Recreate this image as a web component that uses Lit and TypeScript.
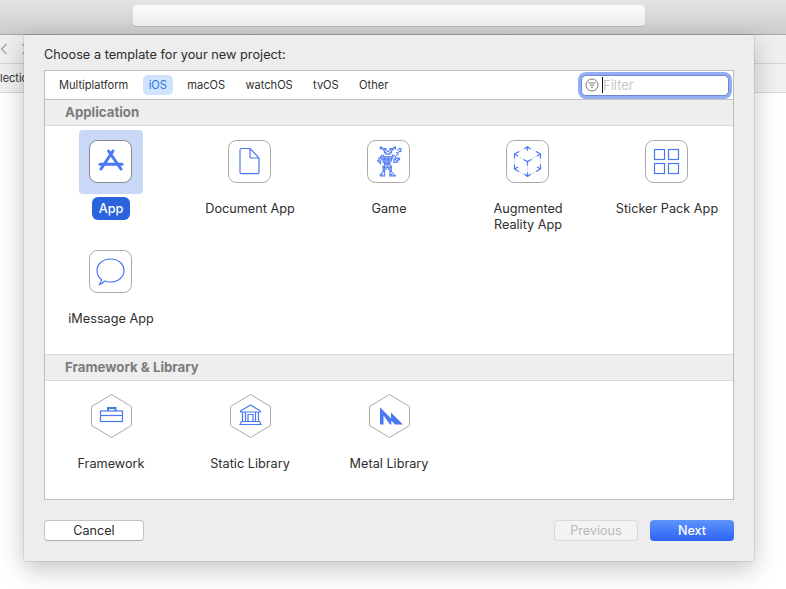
import { LitElement, html, css, svg } from "lit";
import { customElement } from "lit/decorators.js";

const GAME = [
  "..##........##....",
  "..#####..#####..##",
  "....###..###...#.#",
  ".....#.##.#.....##",
  ".....##..##...##..",
  "......####.....#..",
  "...##......##.#...",
  "..##########.#....",
  ".###########.####.",
  ".#.########.##.##.",
  "###.#######.#.##..",
  ".##.######..###...",
  "..#..#####........",
  ".....#####........",
  "....##.#.##.......",
  "....#######.......",
  "....###.###.......",
  "....##...##.......",
  "....##...##.......",
  "...#.#...#.#......",
  "..##.#...##.#.....",
  "..####...#####....",
];

const gamePixels = GAME.flatMap((row, y) =>
  [...row].map((c, x) =>
    c === "#" ? svg`<rect x=${(10 + x * 1.36).toFixed(2)} y=${(6.6 + y * 1.36).toFixed(2)} width="1.36" height="1.36"></rect>` : null
  )
);

const ICONS: Record<string, unknown> = {
  app: svg`<g class="line thick"><path d="M19.500 11 32 29"/><path d="M24 11 12 29"/><path d="M11 24.300h22"/></g>`,
  doc: svg`<path class="line" d="M13.500 8.500h8.500l9 9.500v14.200a1.500 1.500 0 0 1-1.500 1.500h-16a1.500 1.500 0 0 1-1.500-1.500V10a1.500 1.500 0 0 1 1.500-1.500Z"/><path class="line" d="M22 8.500V16a2 2 0 0 0 2 2h7"/>`,
  game: svg`<g class="fill">${gamePixels}</g>`,
  ar: svg`
    <g class="faint"><path d="M21.500 6.500 34.500 14v15l-13 7.500L8.500 29V14Z"/><path d="M8.500 14l13 7.500 13-7.500M21.500 21.500v15"/></g>
    <g class="line">
      <path d="M18.500 9 21.500 6.700 24.500 9M21.500 6.700v4"/>
      <path d="M30 11.500 34.500 14v4.500M34.500 14l-3.500 2"/>
      <path d="M8.500 18.500V14l4.500-2.500M8.500 14l3.500 2"/>
      <path d="M8.500 24.500V29l4.500 2.500M8.500 29l3.500-2"/>
      <path d="M34.500 24.500V29L30 31.500M34.500 29 31 27"/>
      <path d="M18.500 34 21.500 36.500 24.500 34M21.500 36.500v-4"/>
      <path d="M17.500 19.500l4 2 4-2M21.500 21.500v4"/>
    </g>`,
  sticker: svg`<g class="line"><rect x="9.500" y="9.500" width="10" height="10"/><rect x="23.500" y="9.500" width="10" height="10"/><rect x="9.500" y="23.500" width="10" height="10"/><rect x="23.500" y="23.500" width="10" height="10"/></g>`,
  msg: svg`<path class="line" d="M21.500 9C29 9 35 14 35 20.500S29 32 21.500 32c-2 0-4-.3-5.700-1-1.500 1.600-3.300 2.800-5.300 3.300 1-1.300 1.800-2.800 2-4.600C9.700 27.500 8 24.200 8 20.500 8 14 14 9 21.500 9Z"/>`,
  brief: svg`<g class="line"><rect x="9.500" y="17" width="22" height="10.500"/><path d="M9.500 21.500h22"/><path d="M17 17v-3h7.500v3" class="thick2"/></g>`,
  bank: svg`<g class="line"><path d="M20.500 11 10.500 17v1h20v-1Z"/><path d="M12.500 18v9.500M15.500 18v9.500M25.500 18v9.500M28.500 18v9.500M18 28v-7.500h5V28"/><path d="M11.500 27.500h18L31 30.500H10Z"/></g>`,
  metal: svg`<path class="fill" d="M11 13.300 22 24.500v-6L34 30.500H26L22.300 26.500v4H21L14.500 21.500v9H11Z"/>`,
};

interface Tile { label: string; icon: string; selected?: boolean; hex?: boolean }

const APPS: Tile[] = [
  { label: "App", icon: "app", selected: true },
  { label: "Document App", icon: "doc" },
  { label: "Game", icon: "game" },
  { label: "Augmented Reality App", icon: "ar" },
  { label: "Sticker Pack App", icon: "sticker" },
  { label: "iMessage App", icon: "msg" },
];
const LIBS: Tile[] = [
  { label: "Framework", icon: "brief", hex: true },
  { label: "Static Library", icon: "bank", hex: true },
  { label: "Metal Library", icon: "metal", hex: true },
];
const TABS = ["Multiplatform", "iOS", "macOS", "watchOS", "tvOS", "Other"];

@customElement("app-root")
export class AppRoot extends LitElement {
  static styles = css`
    :host {
      display: block;
      position: relative;
      width: 786px;
      height: 589px;
      overflow: hidden;
      background: #fff;
      font-family: Inter, "Liberation Sans", sans-serif;
      font-size: 12px;
      color: #2b2b2b;
    }
    .titlebar {
      border-bottom: 1px solid #a8a8a8;
      background: linear-gradient(#e4e4e4, #cccccc);
      display: flex;
      padding-left: 133px;
      padding-top: 5px;
      height: 29px;
    }
    .address {
      width: 512px;
      height: 22px;
      box-sizing: border-box;
      border-radius: 4px;
      border-bottom: 1px solid #b5b5b5;
      background: linear-gradient(#fafafa, #efefef);
    }
    .toolbar {
      height: 28px;
      border-bottom: 1px solid #d6d6d6;
      background: #efefef;
      display: flex;
      align-items: center;
      gap: 13px;
    }
    .toolbar svg { display: block; flex: none; }
    .tabrow {
      height: 28px;
      border-bottom: 1px solid #d6d6d6;
      background: #f0f0f0;
      display: flex;
      align-items: center;
      font-size: 11px;
      color: #333;
    }
    .sheet {
      position: absolute;
      left: 24px;
      top: 35px;
      width: 730px;
      height: 526px;
      box-sizing: border-box;
      padding: 12px 20px 20px;
      background: #ededed;
      box-shadow: 0 0 1px rgba(0, 0, 0, 0.45), 0 8px 24px rgba(0, 0, 0, 0.24);
      display: flex;
      flex-direction: column;
    }
    .heading { font-size: 12.75px; line-height: 15px; height: 23px; color: #2c2c2c; }
    .panel {
      height: 430px;
      box-sizing: border-box;
      border: 1px solid #bcbcbc;
      background: #fff;
      display: flex;
      flex-direction: column;
    }
    .tabs {
      height: 29px;
      flex: none;
      box-sizing: border-box;
      display: flex;
      align-items: center;
      padding: 0 2px 0 8px;
      gap: 8.3px;
      border-bottom: 1px solid #c2c2c2;
      font-size: 11.1px;
    }
    .tab { padding: 0 6px; height: 20px; line-height: 20px; border-radius: 5px; color: #303030; }
    .tab.on { background: #cfe3fd; color: #2f6fe0; }
    .filter {
      margin-left: auto;
      width: 148px;
      height: 21px;
      margin-right: 2px;
      box-sizing: border-box;
      border-radius: 5px;
      border: 1px solid #6d87dc;
      box-shadow: 0 0 0 3px #93aef2;
      background: #fff;
      display: flex;
      align-items: center;
      padding-left: 3px;
      font-size: 13px;
      color: #c6c6c6;
    }
    .filter svg { display: block; flex: none; }
    .caret { width: 1px; height: 16px; background: #111; margin: 0 0 0 3px; flex: none; }
    .section {
      height: 26px;
      flex: none;
      box-sizing: border-box;
      border-bottom: 1px solid #d8d8d8;
      background: #eeeeee;
      padding: 0 20px;
      line-height: 25px;
      font-weight: 700;
      font-size: 13.25px;
      color: #7c7c7c;
    }
    .section.second { border-top: 1px solid #d8d8d8; height: 27px; }
    .grid { display: flex; flex-wrap: wrap; column-gap: 7px; }
    .grid.apps { height: 228px; flex: none; padding-top: 4px; box-sizing: border-box; align-content: flex-start; }
    .grid.libs { padding-top: 3px; }
    .tile {
      width: 132px;
      height: 110px;
      display: flex;
      flex-direction: column;
      align-items: center;
      text-align: center;
    }
    .pad {
      width: 64px;
      height: 64px;
      flex: none;
      border-radius: 4px;
      display: flex;
      align-items: center;
      justify-content: center;
    }
    .tile.sel .pad { background: #c8d8f6; }
    .box { display: block; }
    .frame { fill: #fff; stroke: #a9a9a9; stroke-width: 1; }
    .sel .frame { stroke: #85878f; }
    .line { fill: none; stroke: #4a78f0; stroke-width: 1.2; }
    .line.thick { stroke-width: 3; stroke-linecap: round; }
    .thick2 { stroke-width: 2; }
    .fill { fill: #4a78f0; }
    .faint { fill: none; stroke: #dfe4f2; stroke-width: 1; }
    .label {
      margin-top: 7px;
      font-size: 12.7px;
      line-height: 16px;
      color: #2e2e2e;
      max-width: 104px;
    }
    .sel .label {
      background: #2a63dc;
      color: #fff;
      font-weight: 500;
      border-radius: 6px;
      padding: 3px 7px;
      line-height: 17px;
      margin-top: 3px;
    }
    .libs .tile { height: 90px; }
    .libs .label { margin-top: 8px; }
    .actions { display: flex; margin-top: 20px; gap: 12px; }
    .btn {
      width: 84px;
      height: 21px;
      box-sizing: border-box;
      border-radius: 4px;
      font-size: 12.6px;
      line-height: 21px;
      text-align: center;
    }
    .cancel { width: 100px; margin-right: auto; background: #fff; border: 1px solid #c4c4c4; border-bottom-color: #acacac; line-height: 19px; }
    .prev { background: #f3f3f3; border: 1px solid #d9d9d9; color: #b9b9b9; line-height: 19px; }
    .next { background: linear-gradient(#5d94fb, #2c62f6); color: #fff; font-weight: 500; }
  `;

  private icon(t: Tile) {
    if (t.hex) {
      return html`<svg class="box" width="41" height="44" viewBox="0 0 41 44">
        <path class="frame" d="M20.500.5 40.500 12.500v19l-20 12-20-12v-19Z"></path>
        ${ICONS[t.icon]}
      </svg>`;
    }
    return html`<svg class="box" width="44" height="44" viewBox="0 0 44 44">
      <rect class="frame" x=".5" y=".5" width="42" height="42" rx="8"></rect>
      ${ICONS[t.icon]}
    </svg>`;
  }

  private tile(t: Tile) {
    return html`<div class="tile ${t.selected ? "sel" : ""}">
      <div class="pad">${this.icon(t)}</div>
      <div class="label">${t.label}</div>
    </div>`;
  }

  render() {
    return html`
      <div class="titlebar"><div class="address"></div></div>
      <div class="toolbar">
        <svg width="8" height="12" viewBox="0 0 8 12"><path d="M6.500 1 1.500 6l5 5" fill="none" stroke="#a5a5a5" stroke-width="1.300"></path></svg>
        <svg width="8" height="12" viewBox="0 0 8 12"><path d="M1.500 1l5 5-5 5" fill="none" stroke="#a5a5a5" stroke-width="1.300"></path></svg>
      </div>
      <div class="tabrow"><span>lection</span></div>
      <div class="sheet">
        <div class="heading">Choose a template for your new project:</div>
        <div class="panel">
          <div class="tabs">
            ${TABS.map((t) => html`<div class="tab ${t === "iOS" ? "on" : ""}">${t}</div>`)}
            <div class="filter">
              <svg width="14" height="14" viewBox="0 0 14 14">
                <circle cx="7" cy="7" r="6" fill="none" stroke="#7c7c7c"></circle>
                <path d="M3.500 5h7M4.800 7.200h4.400M6 9.400h2" stroke="#7c7c7c" fill="none"></path>
              </svg>
              <span class="caret"></span>Filter
            </div>
          </div>
          <div class="section">Application</div>
          <div class="grid apps">${APPS.map((t) => this.tile(t))}</div>
          <div class="section second">Framework &amp; Library</div>
          <div class="grid libs">${LIBS.map((t) => this.tile(t))}</div>
        </div>
        <div class="actions">
          <div class="btn cancel">Cancel</div>
          <div class="btn prev">Previous</div>
          <div class="btn next">Next</div>
        </div>
      </div>
    `;
  }
}
